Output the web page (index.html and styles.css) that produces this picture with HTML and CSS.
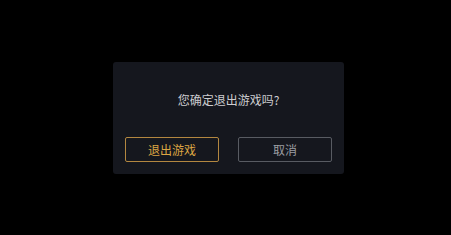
FILE: index.html
```html
<!DOCTYPE html>
<html lang="zh">
<head>
<meta charset="utf-8">
<link rel="stylesheet" href="styles.css">
</head>
<body>
<div class="dialog">
  <p class="message">您确定退出游戏吗?</p>
  <div class="actions">
    <button class="btn btn-primary">退出游戏</button>
    <button class="btn btn-secondary">取消</button>
  </div>
</div>
</body>
</html>
```

FILE: styles.css
```css
html, body {
  margin: 0;
  padding: 0;
  background: #000;
  width: 451px;
  height: 235px;
  overflow: hidden;
}
body {
  padding-top: 62px;
  box-sizing: border-box;
  font-family: "Noto Sans CJK SC", "Noto Sans", sans-serif;
}
.dialog {
  margin-left: 113px;
  width: 231px;
  height: 112px;
  box-sizing: border-box;
  background: #15171e;
  border-radius: 3px;
  padding: 29px 12px 12px;
  display: flex;
  flex-direction: column;
}
.message {
  margin: 0;
  height: 18px;
  line-height: 18px;
  font-size: 12px;
  color: #cdcdd0;
  text-align: center;
}
.actions {
  margin-top: 28px;
  display: flex;
  gap: 19px;
}
.btn {
  width: 94px;
  height: 25px;
  box-sizing: border-box;
  background: transparent;
  border-radius: 2px;
  font-family: inherit;
  font-size: 12px;
  line-height: 1;
  padding: 0;
}
.btn-primary {
  border: 1px solid #b38740;
  color: #dca543;
}
.btn-secondary {
  border: 1px solid #585b62;
  color: #9d9ea2;
}
```
